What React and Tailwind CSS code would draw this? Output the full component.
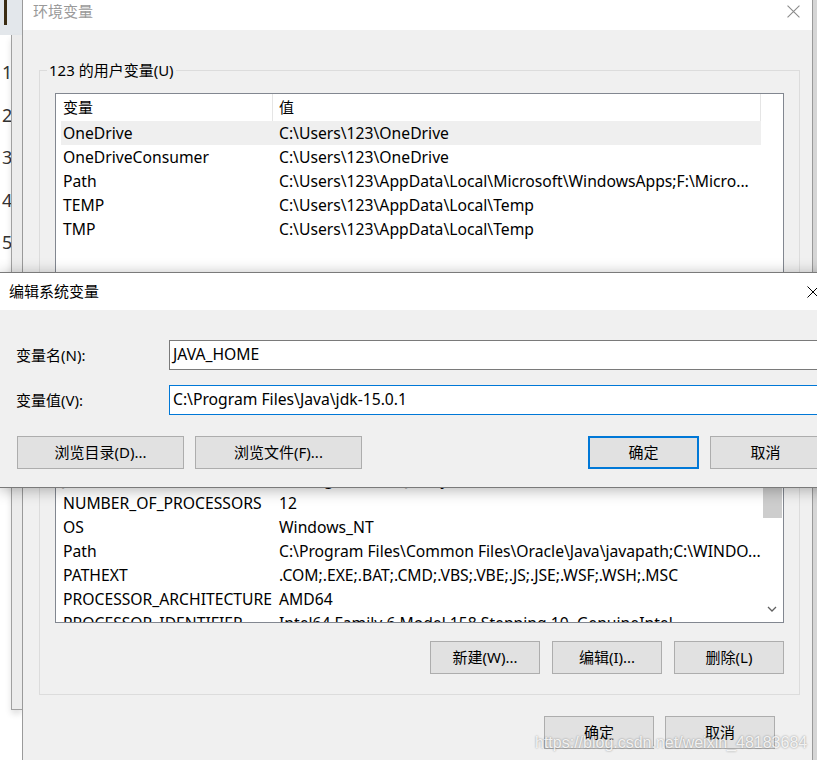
import clsx from 'clsx'

const userVars = [
    ['OneDrive', 'C:\\Users\\123\\OneDrive'],
    ['OneDriveConsumer', 'C:\\Users\\123\\OneDrive'],
    ['Path', 'C:\\Users\\123\\AppData\\Local\\Microsoft\\WindowsApps;F:\\Micro...'],
    ['TEMP', 'C:\\Users\\123\\AppData\\Local\\Temp'],
    ['TMP', 'C:\\Users\\123\\AppData\\Local\\Temp'],
]

const sysVars = [
    ['ComSpec', 'C:\\WINDOWS\\system32\\cmd.exe'],
    ['DriverData', 'C:\\Windows\\System32\\Drivers\\DriverData'],
    ['JAVA_HOME', 'C:\\Program Files\\Java\\jdk-15.0.1'],
    ['NUMBER_OF_PROCESSORS', '12'],
    ['OS', 'Windows_NT'],
    ['Path', 'C:\\Program Files\\Common Files\\Oracle\\Java\\javapath;C:\\WINDO...'],
    ['PATHEXT', '.COM;.EXE;.BAT;.CMD;.VBS;.VBE;.JS;.JSE;.WSF;.WSH;.MSC'],
    ['PROCESSOR_ARCHITECTURE', 'AMD64'],
    ['PROCESSOR_IDENTIFIER', 'Intel64 Family 6 Model 158 Stepping 10, GenuineIntel'],
]

function CloseX({color = '#000', size = 12}) {
    return (
        <svg width={size} height={size} viewBox="0 0 12 12" fill="none" stroke={color} strokeWidth="1">
            <path d="M0.5 0.5L11.5 11.5M11.5 0.5L0.5 11.5"/>
        </svg>
    )
}

function Btn({children, className, primary}) {
    return (
        <button
            type="button"
            className={clsx(
                'flex h-[33px] items-center justify-center bg-[#e1e1e1] text-[15px] text-black',
                primary ? 'border-2 border-[#0078d7]' : 'border border-[#adadad]',
                className,
            )}
        >
            {children}
        </button>
    )
}

function Row({name, value, active}) {
    return (
        <div className={clsx('flex h-[24px] items-center whitespace-nowrap text-[15.7px] leading-[24px]', active && 'bg-[#efefef]')}>
            <div className="w-[212px] shrink-0 overflow-hidden pl-[2px]">{name}</div>
            <div className="flex-1 overflow-hidden pl-[6px]">{value}</div>
        </div>
    )
}

function Group({label, children, className}) {
    return (
        <div className={clsx('relative ml-[16px] w-[761px] border border-[#dcdcdc] px-[15px]', className)}>
            <span className="absolute -top-[12px] left-[7px] bg-[#f0f0f0] px-[2px] leading-[22px]">{label}</span>
            {children}
        </div>
    )
}

function LeftStrip() {
    return (
        <div className="flex w-[22px] shrink-0 flex-col">
            <div className="flex h-[35px] bg-[#e3e7eb]">
                <div className="ml-[4px] h-[25px] w-[3px] bg-[#3b2c12]"/>
            </div>
            <div className="flex">
                <div className="w-[11px] overflow-hidden pl-[2px] pt-[16px] text-[18px] leading-[42.5px] text-[#333]">
                    <div>1</div>
                    <div>2</div>
                    <div>3</div>
                    <div>4</div>
                    <div>5</div>
                </div>
                <div className="h-[675px] w-[11px] border-b border-l border-[#a0a0a0] bg-[#ececec] shadow-[0_4px_6px_rgba(0,0,0,0.12)]"/>
            </div>
        </div>
    )
}

function EnvDialog() {
    return (
        <div className="flex w-[791px] shrink-0 flex-col border-x border-[#9a9a9a] bg-[#f0f0f0]">
            <div className="flex h-[30px] items-center justify-between bg-white pb-[7px] pl-[10px] pr-[12px]">
                <span className="text-[#9a9a9a]">环境变量</span>
                <CloseX color="#8a8a8a" size={13}/>
            </div>

            <Group label="123 的用户变量(U)" className="mt-[40px] h-[281px]">
                <div className="mt-[22px] flex h-[198px] w-[729px] border border-[#828790] bg-white">
                    <div className="ml-[5px] w-[700px]">
                        <div className="flex h-[27px] items-center">
                            <div className="h-full w-[212px] border-r border-[#e5e5e5] pl-[2px] leading-[27px]">变量</div>
                            <div className="h-full flex-1 border-r border-[#e5e5e5] pl-[6px] leading-[27px]">值</div>
                        </div>
                        {userVars.map(([n, v], i) => (
                            <Row key={n} name={n} value={v} active={i === 0}/>
                        ))}
                    </div>
                </div>
                <div className="mt-[10px] flex justify-end gap-[12px]">
                    <Btn className="w-[110px]">新建(N)...</Btn>
                    <Btn className="w-[110px]">编辑(E)...</Btn>
                    <Btn className="w-[110px]">删除(D)</Btn>
                </div>
            </Group>

            <Group label="系统变量(S)" className="mt-[19px] pb-[20px]">
                <div className="mt-[22px] flex h-[230px] w-[729px] overflow-hidden border border-[#828790] bg-white">
                    <div className="ml-[5px] w-[700px] overflow-hidden">
                        <div className="flex h-[25px] items-center">
                            <div className="h-full w-[212px] border-r border-[#e5e5e5] pl-[2px]">变量</div>
                            <div className="h-full flex-1 border-r border-[#e5e5e5] pl-[6px]">值</div>
                        </div>
                        {sysVars.map(([n, v]) => (
                            <Row key={n} name={n} value={v}/>
                        ))}
                    </div>
                    <div className="ml-[1px] flex w-[20px] flex-col items-center">
                        <div className="mt-[46px] h-[78px] w-[19px] bg-[#cdcdcd]"/>
                        <div className="flex-1"/>
                        <svg width="10" height="6" viewBox="0 0 10 6" fill="none" stroke="#606060" strokeWidth="1.3" className="mb-[10px]">
                            <path d="M1 1L5 5L9 1"/>
                        </svg>
                    </div>
                </div>
                <div className="mt-[18px] flex justify-end gap-[12px]">
                    <Btn className="w-[110px]">新建(W)...</Btn>
                    <Btn className="w-[110px]">编辑(I)...</Btn>
                    <Btn className="w-[110px]">删除(L)</Btn>
                </div>
            </Group>

            <div className="mt-[21px] flex justify-end gap-[11px] pr-[37px]">
                <Btn className="w-[110px]">确定</Btn>
                <Btn className="w-[110px]">取消</Btn>
            </div>
        </div>
    )
}

function EditDialog() {
    return (
        <div className="absolute left-0 top-[272px] w-[830px] border-y border-[#7a7a7a] bg-[#f0f0f0] shadow-[0_2px_14px_rgba(0,0,0,0.3)]">
            <div className="flex h-[37px] items-center justify-between bg-white pl-[9px] pr-[11px]">
                <span>编辑系统变量</span>
                <CloseX/>
            </div>
            <div className="pb-[18px] pl-[16px] pr-[9px] pt-[30px]">
                <div className="flex items-center">
                    <div className="w-[153px]">变量名(N):</div>
                    <div className="flex h-[30px] flex-1 items-center border border-[#7a7a7a] bg-white pl-[3px] text-[15.7px]">JAVA_HOME</div>
                </div>
                <div className="mt-[15px] flex items-center">
                    <div className="w-[153px]">变量值(V):</div>
                    <div className="flex h-[30px] flex-1 items-center border border-[#0078d7] bg-white pl-[3px] text-[15.7px]">C:\Program Files\Java\jdk-15.0.1</div>
                </div>
                <div className="ml-[1px] mt-[21px] flex items-center">
                    <Btn className="w-[167px]">浏览目录(D)...</Btn>
                    <Btn className="ml-[11px] w-[167px]">浏览文件(F)...</Btn>
                    <Btn primary className="ml-auto w-[111px]">确定</Btn>
                    <Btn className="ml-[11px] w-[111px]">取消</Btn>
                </div>
            </div>
        </div>
    )
}

export default function App() {
    return (
        <main className="relative flex h-[760px] w-[817px] overflow-hidden bg-white font-['Noto_Sans','Noto_Sans_CJK_SC',sans-serif] text-[15px] text-black">
            <LeftStrip/>
            <EnvDialog/>
            <div className="w-[4px] shrink-0 bg-[#d6d6d6]"/>
            <EditDialog/>
            <span className="absolute left-[535px] top-[731px] whitespace-nowrap font-['Liberation_Sans',sans-serif] text-[16px] text-white/85 [text-shadow:0_0_2px_rgba(0,0,0,0.45)]">
                https://blog.csdn.net/weixin_48183684
            </span>
        </main>
    )
}
